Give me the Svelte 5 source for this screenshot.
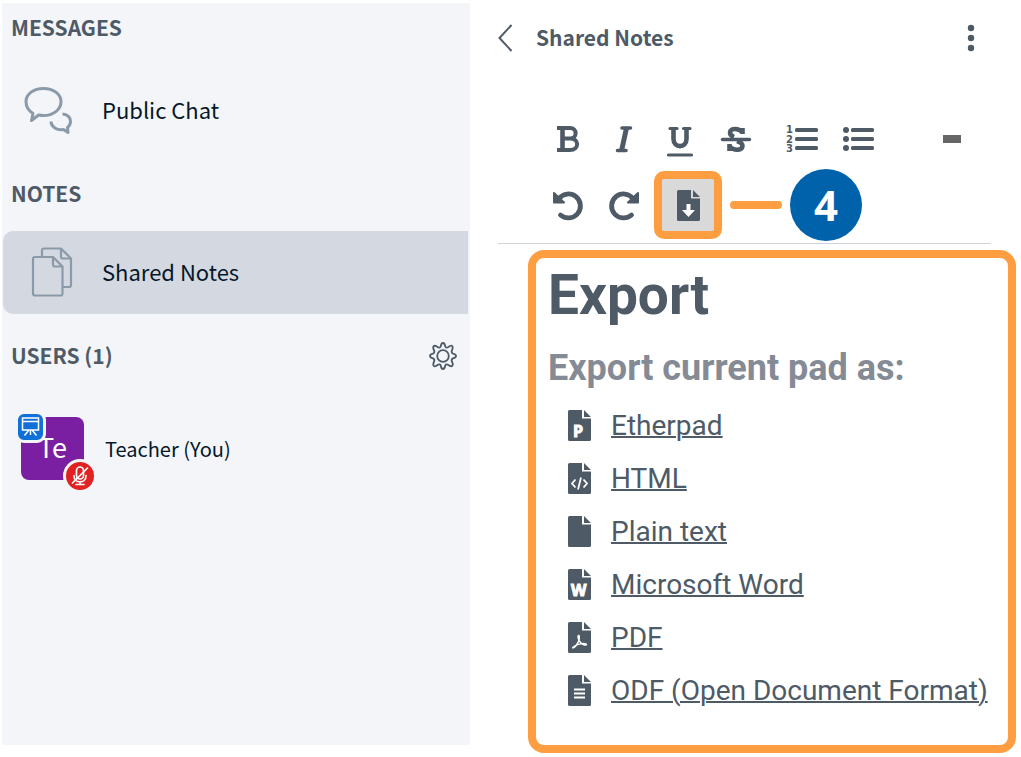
<script lang="ts">
    type Format = { name: string; icon: string };

    const formats: Format[] = [
        { name: 'Etherpad', icon: 'etherpad' },
        { name: 'HTML', icon: 'html' },
        { name: 'Plain text', icon: 'plain' },
        { name: 'Microsoft Word', icon: 'word' },
        { name: 'PDF', icon: 'pdf' },
        { name: 'ODF (Open Document Format)', icon: 'odf' },
    ];

    let active = $state('notes');
    let exportOpen = $state(true);
</script>

<div class="app">
    <aside class="sidebar">
        <h2>MESSAGES</h2>
        <button class="item chat" class:active={active === 'chat'} onclick={() => (active = 'chat')}>
            <svg width="52" height="52" viewBox="0 0 52 52" fill="none" stroke="#8b9aa8" stroke-width="3" stroke-linejoin="round">
                <path d="M12 30.5C7.500 27.500 5 23.500 5 18.700C5 10.800 12.800 5.500 22.500 5.500S40 10.800 40 18.700S32.200 32.500 22.500 32.500C20.800 32.500 19.200 32.300 17.600 32L10.500 37.500Z" />
                <path d="M41.500 31C46 31 49.500 34.400 49.500 38.500C49.500 41 48.400 43 46.500 44.400L47 49.500L42.500 46.500C36 47.600 30 43.800 30 38.500" />
            </svg>
            <span>Public Chat</span>
        </button>

        <h2>NOTES</h2>
        <button class="item notes" class:active={active === 'notes'} onclick={() => (active = 'notes')}>
            <svg width="52" height="52" viewBox="-3 0 52 52" fill="none" stroke="#8b9aa8" stroke-width="2.200" stroke-linejoin="round">
                <path d="M18 12V5.500Q18 3.500 20 3.500H37L47 13.500V40Q47 42 45 42H39" />
                <path d="M37 3.500V11.500Q37 13.500 39 13.500H47" />
                <path d="M11 12H29L38.500 21.500V48.500Q38.500 50.500 36.500 50.500H11Q9 50.500 9 48.500V14Q9 12 11 12Z" />
                <path d="M29 12V19.500Q29 21.500 31 21.500H38.500" />
            </svg>
            <span>Shared Notes</span>
        </button>

        <div class="users-head">
            <h2>USERS (1)</h2>
            <button class="icon-button" aria-label="Manage users">
                <svg width="28" height="28" viewBox="0 0 28 28" fill="none" stroke="#4e5a66" stroke-width="1.800" stroke-linejoin="round">
                    <circle cx="14" cy="14" r="5.800" />
                    <path d="M11.700 4.500Q12.300 1 14 1T16.300 4.500Q17 6.200 19 5.300Q22.300 2.900 23.300 4.200T22.700 9Q22.300 11 24 11.700Q27 12.300 27 14T24 16.300Q22.300 17 22.700 19Q24.600 22.500 23.300 23.800T19 22.700Q17 21.800 16.300 23.500Q15.700 27 14 27T11.700 23.500Q11 21.800 9 22.700Q5.900 25.100 4.700 23.800T5.300 19Q5.700 17 4 16.300Q1 15.700 1 14T4 11.700Q5.700 11 5.300 9Q3.400 5.500 4.700 4.200T9 5.300Q11 6.200 11.700 4.500Z" />
                </svg>
            </button>
        </div>
        <div class="user">
            <div class="avatar">
                Te
                <span class="presenter">
                    <svg width="25" height="26" viewBox="0 0 25 26" fill="none" stroke="#fff" stroke-width="1.500">
                        <path d="M4.500 4H20.500V16H4.500ZM4.500 7.500H20.500M12.500 16V21M10.500 16.500L6.500 21.500M14.500 16.500L18.500 21.500" />
                    </svg>
                </span>
                <span class="muted">
                    <svg width="28" height="28" viewBox="0 0 28 28" fill="none" stroke="#fff" stroke-width="1.700" stroke-linecap="round">
                        <rect x="10.500" y="5" width="7" height="12" rx="3.500" />
                        <path d="M8 13.500C8 22 20 22 20 13.500M14 20V22.500M10 22.500H18M21.500 6L6.500 21" />
                    </svg>
                </span>
            </div>
            <span>Teacher (You)</span>
        </div>
    </aside>

    <main class="panel">
        <header>
            <button class="back">
                <svg width="14" height="28" viewBox="0 0 14 28" fill="none" stroke="#4e5a66" stroke-width="2">
                    <path d="M13.500 1L1.500 14L13.500 27" />
                </svg>
                <span>Shared Notes</span>
            </button>
            <button class="icon-button" aria-label="Options">
                <svg width="8" height="28" viewBox="0 0 8 28" fill="#4e5a66">
                    <circle cx="4" cy="4" r="3.200" />
                    <circle cx="4" cy="14" r="3.200" />
                    <circle cx="4" cy="24" r="3.200" />
                </svg>
            </button>
        </header>

        <div class="toolbar">
            <div class="row">
                <button class="tool" aria-label="Bold">
                    <svg width="32" height="32" viewBox="0 0 32 32" fill="none" stroke="#4e5a66" stroke-width="4.600">
                        <path d="M5 5H18C25.500 5 25.500 15.500 18 15.500H11M18 15.500C27.500 15.500 27.500 27 18 27H5" stroke-width="4" />
                        <path d="M10.500 5V27" />
                    </svg>
                </button>
                <button class="tool" aria-label="Italic">
                    <svg width="32" height="32" viewBox="0 0 32 32" fill="none" stroke="#4e5a66" stroke-width="3.600" stroke-linecap="round">
                        <path d="M14 5H22.500M9.500 27.500H18" />
                        <path d="M18.500 5L13.700 27" stroke-width="5" stroke-linecap="butt" />
                    </svg>
                </button>
                <button class="tool" aria-label="Underline">
                    <svg width="32" height="36" viewBox="0 0 32 36" fill="none" stroke="#4e5a66" stroke-width="4.600" stroke-linecap="round">
                        <path d="M9.500 8V18C9.500 27.500 22.500 27.500 22.500 18V8" stroke-linecap="butt" />
                        <path d="M6 7.500H13M19.500 7.500H26M4.500 34H27.500" stroke-width="3.200" />
                    </svg>
                </button>
                <button class="tool" aria-label="Strikethrough">
                    <svg width="32" height="32" viewBox="0 0 32 32" fill="none" stroke="#4e5a66" stroke-width="4.600">
                        <path d="M22.500 11V5M22.500 9.500C19 4.500 10 5 10 9.500C10 12 11.500 13 14 14M17 18C20 19 22.500 20.500 22.500 23C22.500 28 13 28 9.500 23M9.500 21V28" />
                        <path d="M2.500 16.500H29.500" stroke-width="3.400" stroke-linecap="round" />
                    </svg>
                </button>
                <button class="tool ordered" aria-label="Ordered list">
                    <svg width="32" height="32" viewBox="0 0 32 32" fill="#4e5a66">
                        <rect x="9" y="5" width="23" height="4" rx="1.500" />
                        <rect x="9" y="14" width="23" height="4" rx="1.500" />
                        <rect x="9" y="23" width="23" height="4" rx="1.500" />
                        <text x="0" y="10">1</text>
                        <text x="0" y="19.500">2</text>
                        <text x="0" y="29">3</text>
                    </svg>
                </button>
                <button class="tool" aria-label="Unordered list">
                    <svg width="32" height="32" viewBox="0 0 32 32" fill="#4e5a66">
                        <circle cx="4" cy="7" r="3" />
                        <circle cx="4" cy="16" r="3" />
                        <circle cx="4" cy="25" r="3" />
                        <rect x="9" y="5" width="23" height="4" rx="1.500" />
                        <rect x="9" y="14" width="23" height="4" rx="1.500" />
                        <rect x="9" y="23" width="23" height="4" rx="1.500" />
                    </svg>
                </button>
                <button class="tool more" aria-label="More tools"><span class="dash"></span></button>
            </div>
            <div class="row">
                <button class="tool" aria-label="Undo">
                    <svg width="32" height="32" viewBox="0 0 32 32" fill="none" stroke="#4e5a66" stroke-width="4.800" stroke-linecap="round">
                        <path d="M7 9.500A12 12 0 1 1 8.500 26" />
                        <path d="M2 4V13.500H12Z" fill="#4e5a66" stroke-width="2" stroke-linejoin="round" />
                    </svg>
                </button>
                <button class="tool" aria-label="Redo">
                    <svg width="32" height="32" viewBox="0 0 32 32" fill="none" stroke="#4e5a66" stroke-width="4.800" stroke-linecap="round">
                        <path d="M25 9.500A12 12 0 1 0 23.500 26" />
                        <path d="M30 4V13.500H20Z" fill="#4e5a66" stroke-width="2" stroke-linejoin="round" />
                    </svg>
                </button>
                <button class="tool export" aria-label="Export" onclick={() => (exportOpen = !exportOpen)}>
                    <svg width="23" height="31" viewBox="0 0 23 31">
                        <path d="M1.500 0H14V8.500H23V29.500Q23 31 21.500 31H1.500Q0 31 0 29.500V1.500Q0 0 1.500 0ZM16 0L23 7H16Z" fill="#4e5a66" />
                        <path d="M9.500 14H13.500V20H18L11.500 27L5 20H9.500Z" fill="#fff" />
                    </svg>
                </button>
                <span class="connector"></span>
                <span class="step">4</span>
            </div>
        </div>

        {#if exportOpen}
            <section class="popup">
                <h1>Export</h1>
                <h3>Export current pad as:</h3>
                <ul>
                    {#each formats as format}
                        <li>
                            <svg width="23" height="31" viewBox="0 0 23 31" fill="none" stroke="#fff" stroke-width="1.800">
                                <path d="M1.500 0H14V8.500H23V29.500Q23 31 21.500 31H1.500Q0 31 0 29.500V1.500Q0 0 1.500 0ZM16 0L23 7H16Z" fill="#4e5a66" stroke="none" />
                                {#if format.icon === 'etherpad'}
                                    <text x="5" y="27">P</text>
                                {:else if format.icon === 'html'}
                                    <path d="M7.500 16.500L4 20.500L7.500 24.500M15.500 16.500L19 20.500L15.500 24.500M13 14.500L10 26.500" />
                                {:else if format.icon === 'word'}
                                    <text x="3" y="27">W</text>
                                {:else if format.icon === 'pdf'}
                                    <path d="M5 26C8 25 12.500 18 11 13.500C9.500 13 9.500 17 12.500 20.500C14 22.500 18 24 18.500 22.500C18 20.500 10 21.500 6 24.500Q4 26 5 26" stroke-width="1.500" />
                                {:else if format.icon === 'odf'}
                                    <path d="M6 14.500H17M6 18.500H17M6 22.500H17" />
                                {/if}
                            </svg>
                            <a href="#{format.icon}">{format.name}</a>
                        </li>
                    {/each}
                </ul>
            </section>
        {/if}
    </main>
</div>

<style>
    :global(body) {
        margin: 0;
        background: #fff;
    }

    .app {
        display: grid;
        grid-template-columns: 6fr 7fr;
        padding: 3px 5px 4px 2px;
        color: #4e5a66;
        font-family: 'Noto Sans CJK SC', 'Open Sans', sans-serif;
        font-size: 22px;
    }

    button {
        display: flex;
        align-items: center;
        border: none;
        padding: 0;
        background: none;
        color: inherit;
        font: inherit;
        cursor: pointer;
    }

    svg {
        display: block;
        flex: none;
    }

    h1,
    h2,
    h3,
    ul {
        margin: 0;
        padding: 0;
    }

    .sidebar {
        margin-bottom: 8px;
        background: #f3f5f9;
    }

    h2 {
        padding: 0 0 2px 9px;
        font-size: 21px;
        font-weight: 700;
        line-height: 48px;
    }

    .item {
        gap: 29px;
        width: calc(100% - 3px);
        height: 83px;
        margin: 12px 2px 17px 1px;
        padding: 0 0 4px 18px;
        border-radius: 10px 0 0 10px;
        color: #06172a;
    }

    .item.chat {
        margin-top: 16px;
    }

    .item.active {
        background: #d4d9e1;
    }

    .users-head {
        display: flex;
        align-items: center;
        justify-content: space-between;
        padding-right: 13px;
    }

    .user {
        display: flex;
        align-items: center;
        gap: 21px;
        margin-top: 36px;
        padding-left: 19px;
        color: #06172a;
        font-size: 20px;
    }

    .avatar {
        position: relative;
        width: 63px;
        height: 63px;
        border-radius: 8px;
        background: #7b1fa2;
        color: #fff;
        font-size: 27px;
        line-height: 60px;
        text-align: center;
    }

    .presenter,
    .muted {
        position: absolute;
        border: 3px solid #f3f5f9;
    }

    .presenter {
        top: -6px;
        left: -6px;
        border-radius: 9px;
        background: #1070d7;
    }

    .muted {
        right: -13px;
        bottom: -13px;
        border-radius: 50%;
        background: #e22222;
    }

    header {
        display: flex;
        align-items: center;
        justify-content: space-between;
        height: 70px;
        padding: 0 41px 0 28px;
    }

    .back {
        gap: 24px;
        font-size: 21px;
        font-weight: 700;
        line-height: 28px;
    }

    .back span {
        padding-bottom: 2px;
    }

    .toolbar {
        margin: 36px 25px 0 28px;
        padding: 0 11px 2px 42px;
        border-bottom: 1px solid #cdd3d8;
    }

    .row {
        display: flex;
        align-items: center;
        height: 60px;
    }

    .row:last-child {
        height: 72px;
    }

    .tool {
        justify-content: center;
        width: 56px;
        height: 56px;
    }

    .ordered {
        margin-left: 10px;
    }

    .ordered text {
        font: 700 10px 'DejaVu Sans', sans-serif;
    }

    .more {
        margin-left: auto;
    }

    .dash {
        width: 18px;
        height: 8px;
        background: #666;
    }

    .export {
        box-sizing: border-box;
        width: 68px;
        height: 68px;
        margin: 0 8px 0 2px;
        border: 8px solid #ff9e40;
        border-radius: 10px;
        background: #d9d9d9;
    }

    .connector {
        width: 52px;
        height: 8px;
        border-radius: 4px;
        background: #ff9e40;
    }

    .step {
        width: 72px;
        margin-left: 8px;
        border-radius: 50%;
        background: #0062ab;
        color: #fff;
        font: 700 42px/72px 'Open Sans', sans-serif;
        text-align: center;
    }

    .popup {
        margin: 6px 0 0 58px;
        padding: 0 12px 28px;
        border: 8px solid #ff9e40;
        border-radius: 16px;
        font-family: Roboto, sans-serif;
    }

    h1 {
        font-size: 55px;
        line-height: 74px;
    }

    h3 {
        margin: 15px 0 10px;
        color: #858b95;
        font-size: 36px;
        line-height: 42px;
    }

    ul {
        list-style: none;
    }

    li {
        display: flex;
        align-items: center;
        gap: 20px;
        height: 53px;
        padding-left: 20px;
        font-size: 28px;
        white-space: nowrap;
    }

    li a {
        color: inherit;
        text-decoration-thickness: 2px;
    }

    li text {
        fill: #fff;
        stroke: #fff;
        stroke-width: 1px;
        font: 700 16px 'Open Sans', sans-serif;
    }
</style>
